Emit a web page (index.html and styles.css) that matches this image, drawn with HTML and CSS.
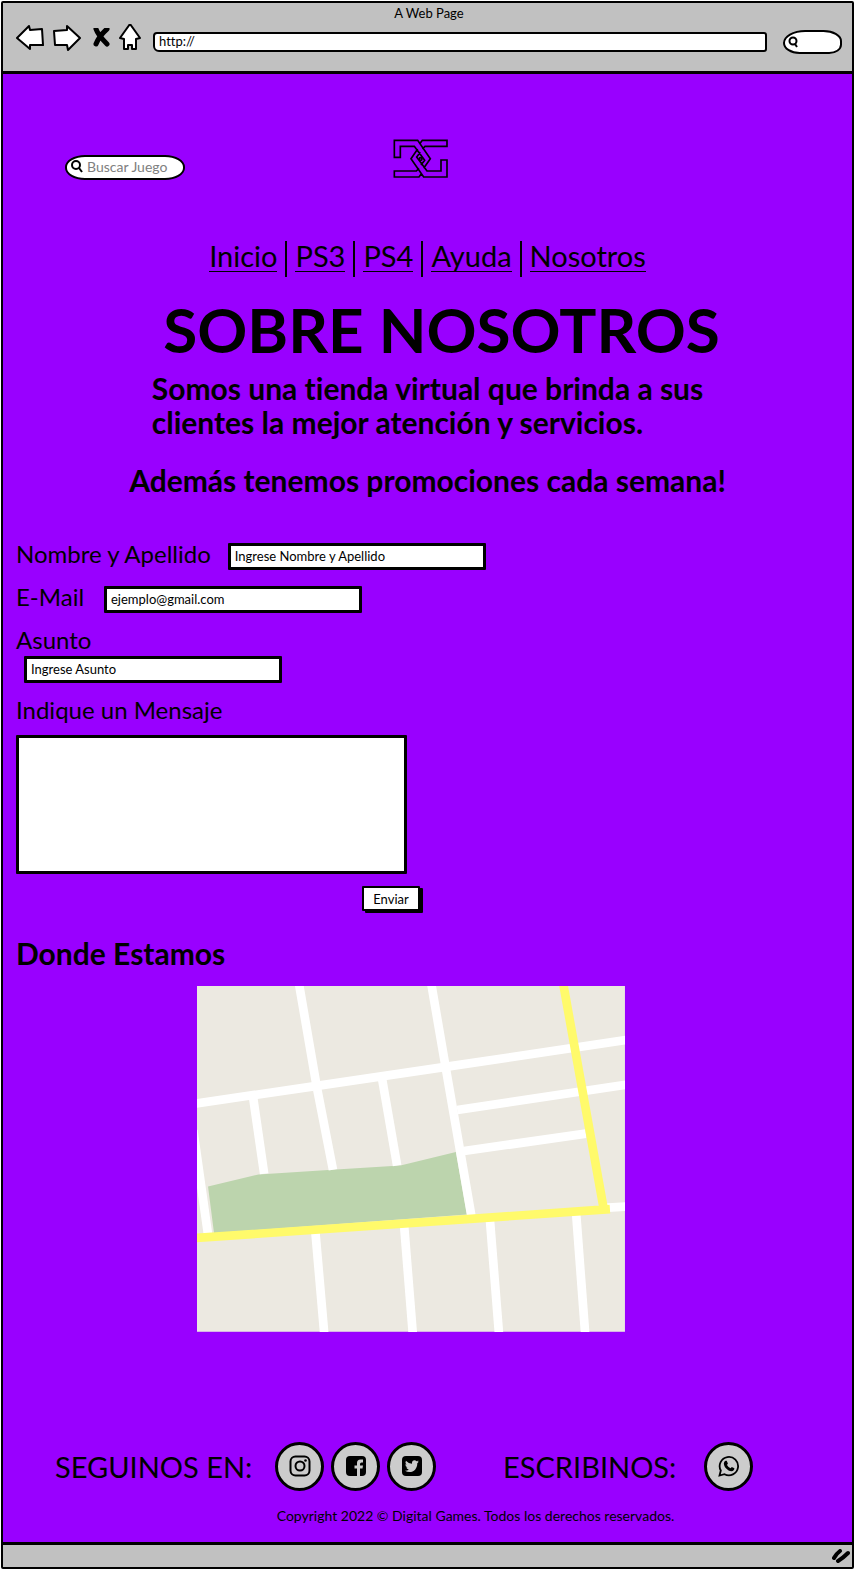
FILE: index.html
```html
<!DOCTYPE html>
<html lang="es">
<head>
<meta charset="utf-8">
<meta name="viewport" content="width=device-width, initial-scale=1">
<title>A Web Page</title>
<link rel="stylesheet" href="styles.css">
</head>
<body>
<div class="window">
  <header class="chrome">
    <div class="chrome-title">A Web Page</div>
    <div class="chrome-bar">
      <div class="chrome-buttons">
        <button type="button" aria-label="Atrás"><svg width="28" height="28" viewBox="0 0 28 28"><path class="sheet" d="M1 14 L13 2 L14 6 L26 5 L27 21 L14 21 L14 25 Z"/></svg></button>
        <button type="button" aria-label="Adelante"><svg width="28" height="28" viewBox="0 0 28 28"><path class="sheet" d="M1 7 L14 6 L14 2 L27 14 L15 26 L14 21 L2 21 Z"/></svg></button>
        <button type="button" aria-label="Detener"><svg width="20" height="20" viewBox="-3 1 20 20"><path class="cross" d="M3 2 Q5 8 14 17 M14 2 Q6 9 3 17"/></svg></button>
        <button type="button" aria-label="Página principal"><svg width="22" height="28" viewBox="0 1 22 28"><path class="sheet" d="M11 1 L21 15 L17 16 L17 26 L13 26 L13 22 L9 22 L9 26 L5 26 L5 16 L1 15 Z"/></svg></button>
      </div>
      <input class="address" type="text" value="http://" aria-label="Dirección">
      <label class="chrome-search">
        <svg width="11" height="12" viewBox="0 0 11 12"><circle cx="5" cy="5" r="3.5" fill="none" stroke="#000" stroke-width="2"/><path d="M7 8 L9 11" stroke="#000" stroke-width="2"/></svg>
        <input type="text" aria-label="Buscar en la web">
      </label>
    </div>
  </header>

  <main class="page">
    <div class="top">
      <label class="search">
        <svg width="12" height="13" viewBox="0 0 12 13"><circle cx="5" cy="5" r="4" fill="none" stroke="#000" stroke-width="2"/><path d="M8 8 L11 12" stroke="#000" stroke-width="2"/></svg>
        <input type="text" placeholder="Buscar Juego" aria-label="Buscar Juego">
      </label>
      <svg class="logo" width="56" height="40" viewBox="38 26 168 120" role="img" aria-label="Digital Games">
        <path d="M130 114 L150 85 L112 30 H42 V81 H60 V48 H102 L133 90 L122 104 M120 38 L126 30 H200 V48 H134 L126 56 M112 56 L92 85 L130 140 H200 V89 H182 V122 H140 L109 80 L120 66 M122 132 L116 140 H42 V122 H108 L116 114"/>
        <circle cx="121" cy="86" r="4"/>
      </svg>
    </div>

    <nav class="menu">
      <a href="#inicio">Inicio</a>
      <a href="#ps3">PS3</a>
      <a href="#ps4">PS4</a>
      <a href="#ayuda">Ayuda</a>
      <a href="#nosotros">Nosotros</a>
    </nav>

    <section class="intro">
      <h1>SOBRE NOSOTROS</h1>
      <p class="lead">Somos una tienda virtual que brinda a sus<br>clientes la mejor atención y servicios.</p>
      <p class="promo">Además tenemos promociones cada semana!</p>
    </section>

    <form class="contact">
      <div class="field"><label for="nombre">Nombre y Apellido</label><input id="nombre" type="text" value="Ingrese Nombre y Apellido"></div>
      <div class="field"><label for="email">E-Mail</label><input id="email" type="text" value="ejemplo@gmail.com"></div>
      <div class="field stacked"><label for="asunto">Asunto</label><input id="asunto" type="text" value="Ingrese Asunto"></div>
      <div class="field message"><label for="mensaje">Indique un Mensaje</label><textarea id="mensaje"></textarea></div>
      <button class="send" type="button">Enviar</button>
    </form>

    <section class="place">
      <h2>Donde Estamos</h2>
      <svg class="map" viewBox="21 18 1281 1035" role="img" aria-label="Mapa">
        <rect x="21" y="18" width="1281" height="1035" fill="#ece9e1"/>
        <path class="park" d="M54 618 L205 582 L425 568 L630 555 L796 515 L829 702 L72 758 Z"/>
        <g class="street">
          <path d="M15 370 L380 317 L765 260 L1310 179"/>
          <path d="M326 10 L379 317 L428 568"/>
          <path d="M722 10 L765 260 L842 704"/>
          <path d="M188 345 L222 580"/>
          <path d="M574 290 L620 555"/>
          <path d="M800 389 L1310 313"/>
          <path d="M820 512 L1185 460"/>
          <path d="M10 450 L54 762"/>
          <path d="M1240 682 L1310 678"/>
          <path d="M375 750 L402 1060"/>
          <path d="M641 735 L667 1060"/>
          <path d="M898 720 L925 1060"/>
          <path d="M1156 700 L1183 1060"/>
        </g>
        <path class="avenue" d="M10 773 L1257 686 M1117 10 L1240 694"/>
      </svg>
    </section>

    <footer class="footer">
      <div class="contacts">
        <span class="follow">SEGUINOS EN:</span>
        <div class="social">
          <a href="#instagram" aria-label="Instagram"><svg width="22" height="22" viewBox="0 0 22 22"><rect x="1.5" y="1.5" width="19" height="19" rx="5" fill="none" stroke="#000" stroke-width="2"/><circle cx="11" cy="11" r="4.5" fill="none" stroke="#000" stroke-width="2"/><circle cx="16.5" cy="5.5" r="1.3"/></svg></a>
          <a href="#facebook" aria-label="Facebook"><svg width="22" height="22" viewBox="0 0 22 22"><rect x="1" y="1" width="20" height="20" rx="4"/><path fill="#ccc" d="M12 21 V13.500 H9.500 V10.500 H12 V8 Q12 4.500 15.500 4.500 H18 V7.500 H16.500 Q15 7.500 15 9 V10.500 H18 L17.500 13.500 H15 V21 Z"/></svg></a>
          <a href="#twitter" aria-label="Twitter"><svg width="22" height="22" viewBox="0 0 22 22"><rect x="1" y="1" width="20" height="20" rx="4"/><path fill="#ccc" d="M18 6.500 L16.300 8.200 C16.300 13.500 13 17 8.500 17 Q6 17 4 15.700 Q6.500 15.700 7.800 14.500 Q5.800 14.200 5.200 12.500 H6.500 Q4.300 11.500 4.300 9.200 L5.600 9.600 Q3.700 7.800 4.900 5.700 Q7.500 8.600 11 8.700 C10.500 5.200 14 4.400 15.600 6.200 L17.500 5.500 L16.500 7 Z"/></svg></a>
        </div>
        <span class="write">ESCRIBINOS:</span>
        <div class="social">
          <a href="#whatsapp" aria-label="WhatsApp"><svg width="22" height="22" viewBox="0 0 22 22"><path fill="none" stroke="#000" stroke-width="1.800" d="M1.500 20.500 L2.800 15.500 A9.200 9.200 0 1 1 6.500 19.200 Z"/><path d="M7.500 5.800 H8.700 L9.900 8.500 L9 10 Q10.300 12.400 12.600 13.300 L13.800 12 L16.400 13.300 Q16.300 16 13.500 16.200 C9.500 16 6 12 5.800 8.500 Q6 6.500 7.500 5.800 Z"/></svg></a>
        </div>
      </div>
      <p class="copyright">Copyright 2022 © Digital Games. Todos los derechos reservados.</p>
    </footer>
  </main>

  <div class="status">
    <svg width="18" height="14" viewBox="0 0 18 14"><path d="M2 9 Q4 5 8 2 M6 12 Q11 9 16 4" fill="none" stroke="#000" stroke-width="4" stroke-linecap="round"/></svg>
  </div>
</div>
</body>
</html>
```
FILE: styles.css
```css
* { box-sizing: border-box; }

body {
  margin: 0;
  padding: 1px;
  background: #fff;
  color: #000;
  font-family: Lato, "Open Sans", sans-serif;
  font-size: 13px;
  font-variant-ligatures: none;
}

input, textarea, button {
  font: inherit;
  color: inherit;
}

h1, h2, p { margin: 0; }

.window {
  display: flex;
  flex-direction: column;
  min-height: calc(100vh - 2px);
  border: 2px solid #000;
  border-radius: 2px;
  background: #90f;
}

/* Browser bar */
.chrome {
  padding: 1px 10px 0 13px;
  height: 71px;
  background: #c1c1c1;
  border-bottom: 3px solid #000;
}

.chrome-title {
  line-height: 18px;
  text-align: center;
}

.chrome-bar {
  display: flex;
  align-items: center;
  gap: 12px;
  height: 32px;
}

.chrome-buttons {
  display: flex;
  align-items: center;
  gap: 9px;
  height: 28px;
}

.chrome-buttons button {
  display: flex;
  padding: 0;
  border: 0;
  background: none;
}

.sheet {
  fill: #fff;
  stroke: #000;
  stroke-width: 2;
  stroke-linejoin: round;
}

.cross {
  fill: none;
  stroke: #000;
  stroke-width: 5;
  stroke-linecap: round;
}

.address {
  flex: 1;
  min-width: 0;
  height: 20px;
  margin-top: 7px;
  padding: 0 4px 2px;
  border: 2px solid #000;
  border-radius: 4px 3px 3px 6px;
  background: #fff;
}

.chrome-search {
  display: flex;
  align-items: center;
  width: 59px;
  height: 24px;
  margin: 7px 0 0 4px;
  padding-left: 3px;
  border: 2px solid #000;
  border-radius: 24px 20px 14px 18px / 14px 12px 10px 12px;
  background: #fff;
}

.chrome-search input,
.search input {
  flex: 1;
  min-width: 0;
  padding: 0;
  border: 0;
  background: none;
  outline: 0;
}

/* Page */
.page {
  flex: 1;
  padding: 65px 13px 16px;
}

.top {
  display: grid;
  grid-template-columns: 1fr auto 1fr;
  align-items: start;
  padding: 0 14px 0 0;
}

.search {
  display: flex;
  align-items: center;
  gap: 4px;
  width: 120px;
  height: 25px;
  margin: 16px 0 0 49px;
  padding: 0 4px 2px;
  border: 2px solid #000;
  border-radius: 20px / 12px;
  background: #fff;
  font-size: 14px;
}

.search input::placeholder {
  color: #808080;
  opacity: 1;
}

.logo path,
.logo circle {
  fill: none;
  stroke: #000;
  stroke-width: 5;
}

.menu {
  display: flex;
  justify-content: center;
  margin-top: 61px;
  font-size: 29px;
  line-height: 30px;
}

.menu a {
  display: block;
  height: 31px;
  color: inherit;
  text-decoration: none;
  border-bottom: 1px solid #000;
}

.menu a + a {
  position: relative;
  margin-left: 18px;
}

.menu a + a::before {
  content: "";
  position: absolute;
  left: -10px;
  top: 0;
  width: 2px;
  height: 36px;
  background: #000;
}

.intro {
  display: flex;
  flex-direction: column;
  align-items: center;
  margin-top: 17px;
  font-size: 30px;
  font-weight: 700;
}

.intro h1 {
  padding-left: 28px;
  font-size: 62px;
  line-height: 80px;
}

.lead { margin-top: 2px; line-height: 34px; }

.promo { margin-top: 23px; line-height: 36px; }

/* Contact form */
.contact { margin-top: 45px; }

.field {
  display: flex;
  gap: 17px;
  margin-bottom: 16px;
}

.field label {
  min-width: 71px;
  font-size: 24px;
  line-height: 22px;
}

.field input,
.field textarea {
  width: 258px;
  height: 27px;
  padding: 0 4px 2px;
  border: 3px solid #000;
  border-radius: 1px;
  background: #fff;
}

.stacked,
.message { flex-direction: column; }

.stacked { gap: 5px; }

.stacked input { margin-left: 8px; }

.message { gap: 14px; margin-bottom: 12px; }

.field textarea {
  width: 391px;
  max-width: 100%;
  height: 139px;
  resize: none;
}

.send {
  display: block;
  width: 58px;
  height: 25px;
  margin-left: 346px;
  padding: 0;
  border: 2px solid #000;
  border-radius: 1px;
  background: #fff;
  box-shadow: 3px 2px 0 #000;
}

/* Map */
.place { margin-top: 24px; }

.place h2 {
  font-size: 30px;
  line-height: 36px;
}

.map {
  display: block;
  width: 52%;
  margin: 15px 0 0 22%;
}

.street path,
.avenue {
  fill: none;
  stroke: #fff;
  stroke-width: 26;
}

.avenue { stroke: #fffa6b; }

.park { fill: #bcd4ad; }

/* Footer */
.footer { margin-top: 110px; }

.contacts {
  display: flex;
  align-items: center;
  padding-left: 39px;
  font-size: 29px;
}

.follow { width: 220px; }

.write { width: 201px; margin-left: 67px; }

.social { display: flex; gap: 7px; }

.social a {
  display: flex;
  align-items: center;
  justify-content: center;
  width: 49px;
  height: 49px;
  border: 3px solid #000;
  border-radius: 50%;
  background: #ccc;
}

.copyright {
  margin-top: 15px;
  padding-left: 96px;
  font-size: 14px;
  line-height: 20px;
  text-align: center;
}

.status {
  display: flex;
  justify-content: flex-end;
  align-items: center;
  height: 25px;
  padding-right: 2px;
  background: #c1c1c1;
  border-top: 3px solid #000;
}
```
